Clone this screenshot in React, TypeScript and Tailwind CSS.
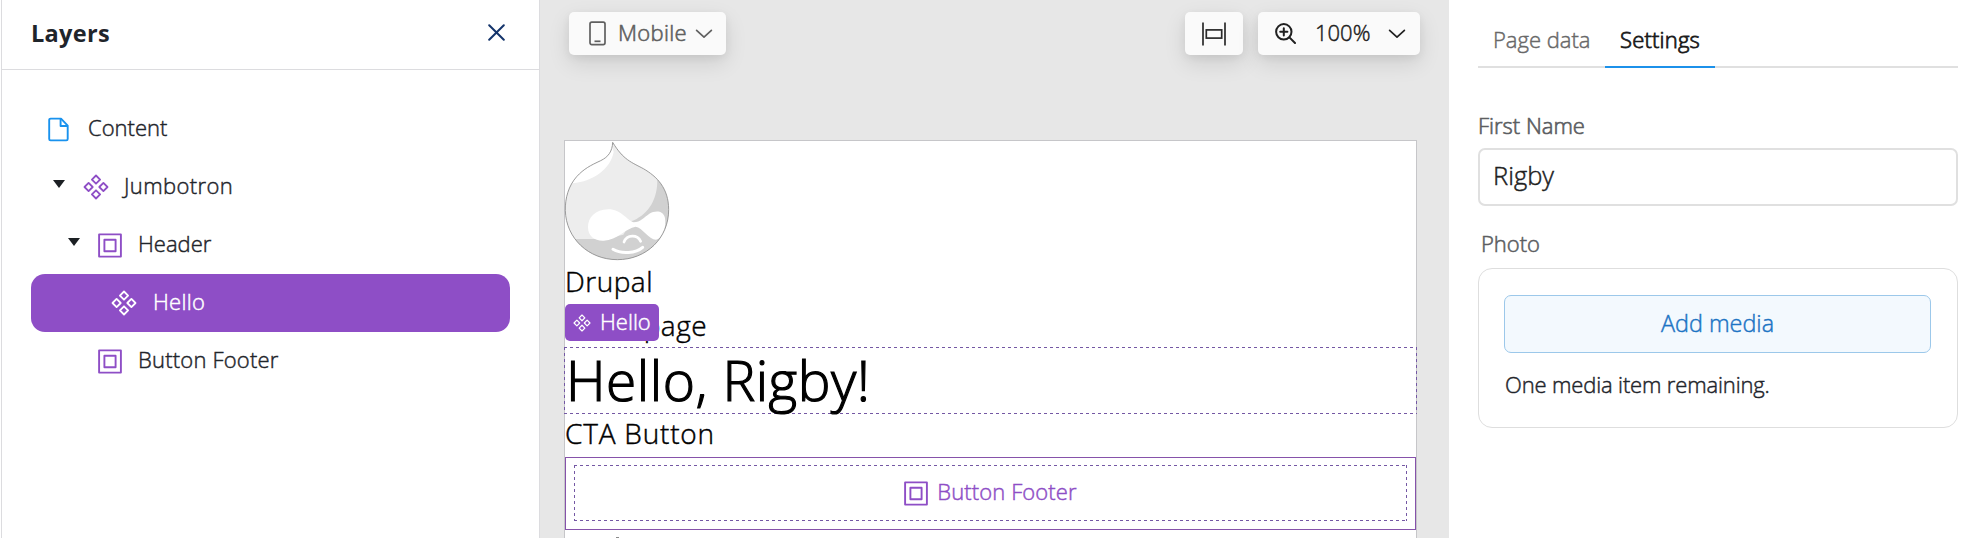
import type { ReactNode } from "react";

function ComponentIcon({ className = "" }: { className?: string }) {
  return (
    <svg viewBox="0 0 26 26" fill="none" stroke="currentColor" strokeWidth="1.8" strokeLinejoin="round" className={className}>
      <path d="M13 1.5 17.1 5.6 13 9.7 8.9 5.6ZM13 16.3 17.1 20.4 13 24.5 8.9 20.4ZM5.6 8.9 9.7 13 5.6 17.1 1.5 13ZM20.4 8.9 24.5 13 20.4 17.1 16.3 13Z" />
    </svg>
  );
}

function SlotIcon() {
  return (
    <svg viewBox="0 0 24 25" fill="none" stroke="currentColor" strokeWidth="1.9" strokeLinejoin="round" className="h-[25px] w-6 shrink-0">
      <rect x="1.1" y="1.4" width="21.8" height="22.2" />
      <rect x="6.4" y="6.8" width="11.2" height="11.4" />
    </svg>
  );
}

function FileIcon() {
  return (
    <svg viewBox="0 0 21 25" fill="none" stroke="currentColor" strokeWidth="1.9" strokeLinejoin="round" className="h-[25px] w-[21px]">
      <path d="M3 1.6H13L19.7 8.6V22A1.4 1.4 0 0 1 18.3 23.4H2.6A1.4 1.4 0 0 1 1.2 22V3A1.4 1.4 0 0 1 2.6 1.6Z" />
      <path d="M12.6 1.8V9H19.5" />
    </svg>
  );
}

function Chevron() {
  return (
    <svg viewBox="0 0 18 10" fill="none" stroke="currentColor" strokeWidth="1.7" strokeLinecap="round" strokeLinejoin="round" className="mt-px h-[10px] w-[18px]">
      <path d="M1.6 1.4 9 8.2 16.4 1.4" />
    </svg>
  );
}

function Caret() {
  return (
    <svg viewBox="0 0 12 8" fill="#1c2024" className="mb-1.5 ml-px h-2 w-3">
      <path d="M0 0H12L6 8Z" />
    </svg>
  );
}

function DrupalLogo() {
  const outline =
    "M158 13C157 40 145 57 122 68C92 82 72 92 50 116C26 143 15 180 16 218C18 300 85 365 172 365C260 365 326 300 326 215C326 150 290 115 250 92C215 73 190 66 158 13Z";
  return (
    <svg viewBox="15 9 315 354" className="block h-[118px] w-[105px] overflow-visible">
      <clipPath id="drop">
        <path d={outline} />
      </clipPath>
      <g clipPath="url(#drop)">
        <path fill="#ededed" d="M0 0H345V378H0Z" />
        <path fill="#fff" d="M0 0H150L161 42C152 92 100 130 38 136L0 170Z" />
        <path fill="#d1d1d1" d="M291 110C298 185 262 232 214 250L190 290L130 303H0V378H345V110Z" />
        <path
          fill="#fff"
          d="M145 214C105 214 84 240 84 267C84 295 104 309 131 308C172 306 198 270 227 266C247 268 266 305 288 305C309 301 319 268 315 240C309 215 284 218 268 227C252 238 242 252 221 253C199 246 184 214 145 214Z"
        />
        <path fill="none" stroke="#fff" strokeWidth="8" strokeLinecap="round" d="M192 312C201 289 232 289 242 310" />
        <path fill="none" stroke="#fff" strokeWidth="9" strokeLinecap="round" d="M159 334C184 349 228 346 248 328" />
      </g>
      <path d={outline} fill="none" stroke="#8c8c8c" strokeWidth="2.6" />
    </svg>
  );
}

function Row({ pad, caret, icon, label, selected }: { pad: string; caret?: boolean; icon: ReactNode; label: ReactNode; selected?: boolean }) {
  return (
    <div className={`flex h-[58px] items-center rounded-[14px] ${pad} ${selected ? "bg-[#8e4ec6] text-white" : "text-[#1f252b]"}`}>
      {caret !== undefined && <span className="flex w-[31px] shrink-0">{caret && <Caret />}</span>}
      {icon}
      <span className="pb-1 pl-px">{label}</span>
    </div>
  );
}

export default function App() {
  const floating = "flex h-[43px] items-center rounded-[5px] bg-[#fafafa] shadow-[0_8px_22px_rgba(0,0,0,0.11),0_3px_8px_rgba(0,0,0,0.06)]";
  const dashed =
    "bg-[linear-gradient(90deg,#7458a4_50%,transparent_50%),linear-gradient(90deg,#7458a4_50%,transparent_50%),linear-gradient(#7458a4_50%,transparent_50%),linear-gradient(#7458a4_50%,transparent_50%)] bg-[length:6px_1px,6px_1px,1px_6px,1px_6px] bg-[position:0_0,0_100%,0_0,100%_0] [background-repeat:repeat-x,repeat-x,repeat-y,repeat-y]";
  return (
    <div className="flex h-[538px] w-[1978px] overflow-hidden bg-white pl-px font-['Open_Sans',sans-serif] text-[22px] leading-[30px] font-light whitespace-nowrap text-[#1f252b] [-webkit-text-stroke:0.45px]">
      <aside className="flex w-[539px] shrink-0 flex-col border-x border-[#dcdcdf]">
        <header className="flex h-[70px] shrink-0 items-center justify-between border-b border-[#dcdcdf] pr-[34px] pl-[29px]">
          <h1 className="pb-1 text-[23.5px] font-bold tracking-[0.3px] [-webkit-text-stroke:0px]">Layers</h1>
          <svg viewBox="0 0 17 17" fill="none" stroke="#14346b" strokeWidth="2" strokeLinecap="round" className="mb-[5px] size-[17px]">
            <path d="M1.2 1.2 15.8 15.8M15.8 1.2 1.2 15.8" />
          </svg>
        </header>
        <div className="mt-[30px] px-[29px]">
          <Row pad="pl-[17px]" icon={<span className="w-[39px] text-[#1992ee]"><FileIcon /></span>} label="Content" />
          <Row pad="pl-[21px]" caret icon={<ComponentIcon className="mr-[14px] mb-px size-[26px] text-[#8e4ec6]" />} label={<span className="tracking-[0.4px]">Jumbotron</span>} />
          <Row pad="pl-[36px]" caret icon={<span className="w-[39px] text-[#8e4ec6]"><SlotIcon /></span>} label="Header" />
          <Row pad="pl-[49px]" caret={false} selected icon={<ComponentIcon className="mr-[15px] mb-px size-[26px]" />} label={<span className="tracking-[0.3px]">Hello</span>} />
          <Row pad="pl-[36px]" caret={false} icon={<span className="w-[39px] text-[#8e4ec6]"><SlotIcon /></span>} label={<span className="tracking-[0.2px]">Button Footer</span>} />
        </div>
      </aside>

      <main className="flex w-[909px] shrink-0 flex-col bg-[#e7e7e7] pt-3 pr-8 pl-6">
        <div className="-mr-[3px] flex gap-[15px] pl-[5px]">
          <button className={`${floating} w-[157px] pl-5 text-[#606060]`}>
            <svg viewBox="0 0 17 25" fill="none" stroke="currentColor" strokeWidth="1.7" className="mr-3 h-[25px] w-[17px]">
              <rect x="1" y="1.2" width="15" height="22.4" rx="1.8" />
              <path d="M5.5 20.3H11.5" />
            </svg>
            <span className="w-[77px] pb-[3px] text-left tracking-[0.3px] [-webkit-text-stroke:0.6px]">Mobile</span>
            <Chevron />
          </button>
          <button className={`${floating} ml-auto w-[58px] justify-center text-[#2a2a2a]`}>
            <svg viewBox="0 0 24 24" fill="none" stroke="currentColor" strokeWidth="1.7" className="size-6">
              <path d="M1 .5V23.5M23 .5V23.5" />
              <rect x="4.3" y="7.9" width="15.4" height="8.2" />
            </svg>
          </button>
          <button className={`${floating} w-[162px] pl-[17px] text-[#202020]`}>
            <svg viewBox="0 0 21 21" fill="none" stroke="currentColor" strokeWidth="2" strokeLinecap="round" className="size-[21px]">
              <circle cx="8.8" cy="8.8" r="7.7" />
              <path d="M14.4 14.4 20 20M8.8 5.2V12.4M5.2 8.8H12.4" />
            </svg>
            <span className="mr-[16px] ml-[19px] w-[57px] pb-[3px] text-left">100%</span>
            <Chevron />
          </button>
        </div>

        <section className="mt-[85px] h-[440px] shrink-0 border border-[#c6c6c9] bg-white text-[28px] leading-[44px] text-black">
          <DrupalLogo />
          <div className="tracking-[0.5px]">Drupal</div>
          <div className="relative">
            <span className="tracking-[0.5px]">Homepage</span>
            <div className="absolute top-px left-0 flex h-[37px] w-[94px] items-center gap-[9px] rounded-[5px] bg-[#8e4ec6] pl-2 text-[22px] leading-[30px] text-white">
              <ComponentIcon className="size-[18px]" />
              <span className="pb-1">Hello</span>
            </div>
          </div>
          <div className={`-mx-px h-[67px] pt-0.5 pl-0.5 text-[55px] leading-[61px] tracking-[0.5px] [-webkit-text-stroke:1.2px] ${dashed}`}>Hello, Rigby!</div>
          <div className="h-[43px] leading-[39px] tracking-[0.8px]">CTA Button</div>
          <div className="h-[73px] border border-[#8652aa] p-2 pt-[7px]">
            <div className={`flex h-full items-center justify-center gap-[9px] text-[22px] leading-[30px] text-[#8e4ec6] ${dashed}`}>
              <SlotIcon />
              <span className="pb-1 tracking-[0.1px]">Button Footer</span>
            </div>
          </div>
          <div className="mt-[7px] ml-[51px] h-3 w-[3px] bg-[#8a8a8a]" />
        </section>
      </main>

      <aside className="flex-1 bg-white pt-4 pr-5 pl-[29px]">
        <nav className="flex h-[52px] border-b-2 border-[#e0e0e0] text-[22px]">
          <span className="w-[127px] pt-2 pl-[15px] text-[#686868]">Page data</span>
          <span className="-mb-0.5 w-[110px] border-b-2 border-[#1c91ea] pt-2 text-center tracking-[0.2px] text-[#1c1c1c] [-webkit-text-stroke:0.8px]">Settings</span>
        </nav>
        <label className="mt-[42px] block text-[#5c5e62] [-webkit-text-stroke:0.65px]">First Name</label>
        <div className="mt-2 h-[58px] rounded-[7px] border-2 border-[#e0e0e0] pt-2 pl-[13px] text-[25.5px] leading-[34px] text-[#202020]">Rigby</div>
        <label className="mt-[22px] ml-0.5 block pl-px text-[#5c5e62] [-webkit-text-stroke:0.55px]">Photo</label>
        <div className="mt-2.5 h-[160px] rounded-[14px] border border-[#dedede] pt-[26px] pr-[26px] pl-[25px]">
          <button className="block h-[58px] w-full rounded-[7px] border border-[#9cc8ea] bg-[#f3f9fe] pb-0.5 text-[23.4px] text-[#1c74c4]">Add media</button>
          <p className="mt-4 pl-px tracking-[-0.15px]">One media item remaining.</p>
        </div>
      </aside>
    </div>
  );
}
